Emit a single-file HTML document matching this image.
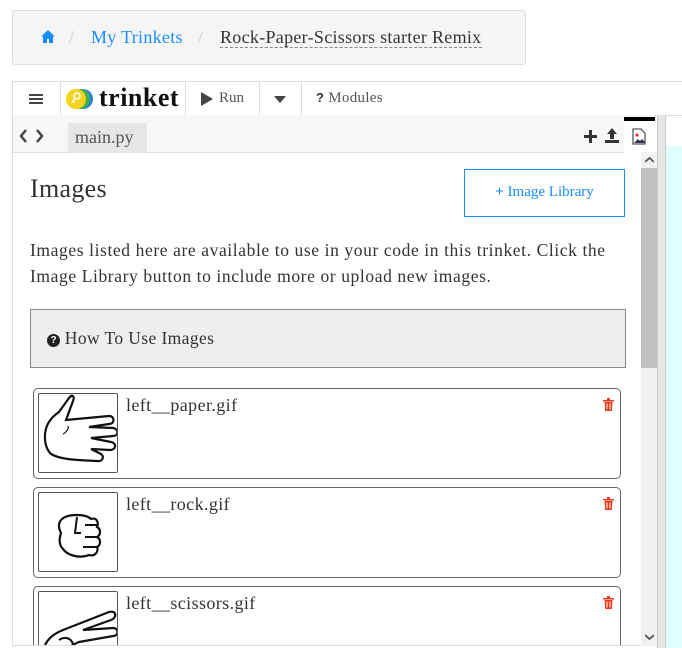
<!DOCTYPE html>
<html><head><style>
*{box-sizing:border-box;margin:0;padding:0}
body{width:682px;height:648px;overflow:hidden;background:#fff;font-family:"Liberation Serif",serif;color:#333;position:relative}
.abs{position:absolute}
.bc{left:12px;top:10px;width:514px;height:55px;background:#f5f5f5;border:1px solid #ddd;border-radius:3px}
.bc span{position:absolute;top:16px;font-size:18px;letter-spacing:0.3px}
.tb{left:12px;top:81px;width:670px;height:35px;border:1px solid #ddd;border-right:none;background:#fff}
.tb .sep{position:absolute;top:0;width:1px;height:34px;background:#ddd}
.tabs{left:12px;top:115px;width:643px;height:38px;background:#f7f7f7;border-left:1px solid #ddd;border-bottom:1px solid #ddd}
.content{left:12px;top:152px;width:629px;height:494px;border-left:1px solid #ddd;border-bottom:1px solid #ddd;overflow:hidden}
.card{position:absolute;left:20px;width:588px;height:91px;border:1px solid #666;border-radius:5px}
.thumb{position:absolute;left:4px;top:4px;width:80px;height:80px;border:1px solid #555;border-radius:2px;overflow:hidden}
.card .nm{position:absolute;left:92px;top:6px;font-size:18px;letter-spacing:0.4px}
.trash{position:absolute;right:6px;top:9px}
</style></head><body>
<div class="abs bc">
<svg class="abs" style="left:28px;top:19px" width="14" height="13" viewBox="0 0 14 13"><path d="M7 0L0 6.5h2V13h4V9h2v4h4V6.5h2z" fill="#1a8cff"/></svg>
<span style="left:56px;color:#ccc">/</span>
<span style="left:78px;color:#1a8cff">My Trinkets</span>
<span style="left:185px;color:#ccc">/</span>
<span style="left:207px;color:#333;border-bottom:1px dashed #888;line-height:20px">Rock-Paper-Scissors starter Remix</span>
</div>
<div class="abs tb">
<div class="abs" style="left:16px;top:12px;width:14px;height:2px;background:#444;box-shadow:0 4px 0 #444,0 8px 0 #444"></div>
<div class="sep" style="left:47px"></div>
<svg class="abs" style="left:52px;top:6px" width="36" height="22" viewBox="0 0 36 22"><circle cx="18" cy="11" r="10" fill="#2a7de1"/><circle cx="15" cy="11" r="10" fill="#3db34a"/><circle cx="11" cy="11" r="10" fill="#f4d41e"/><circle cx="12" cy="8" r="3" fill="none" stroke="#fff" stroke-width="1.5"/><path d="M10 10l-3 5M8 13l2 1" stroke="#fff" stroke-width="1.5"/></svg>
<div class="abs" style="left:86px;top:1px;font-size:26px;font-weight:bold;color:#111;letter-spacing:0.5px">trinket</div>
<div class="sep" style="left:172px"></div>
<svg class="abs" style="left:188px;top:10px" width="12" height="14"><path d="M0 0L12 7L0 14z" fill="#444"/></svg>
<div class="abs" style="left:206px;top:8px;font-size:15px;color:#555">Run</div>
<div class="sep" style="left:246px"></div>
<svg class="abs" style="left:261px;top:14px" width="12" height="7"><path d="M0 0h12L6 7z" fill="#444"/></svg>
<div class="sep" style="left:288px"></div>
<div class="abs" style="left:303px;top:8px;font-size:15px;color:#555;letter-spacing:0.3px"><b style="color:#333;font-family:'Liberation Sans',sans-serif;font-size:13px">?</b> Modules</div>
</div>
<div class="abs tabs">
<svg class="abs" style="left:6px;top:14px" width="30" height="14"><path d="M7 1L2 7l5 6M18 1l5 6-5 6" fill="none" stroke="#444" stroke-width="2.5"/></svg>
<div class="abs" style="left:55px;top:8px;width:79px;height:30px;background:#e6e6e6;font-size:18px;color:#555;padding:4px 0 0 7px">main.py</div>
<svg class="abs" style="left:571px;top:15px" width="13" height="13"><path d="M6.5 0v13M0 6.5h13" stroke="#333" stroke-width="3"/></svg>
<svg class="abs" style="left:591px;top:13px" width="16" height="16"><path d="M8 0L3 6h3v5h4V6h3z M1 12h14v3H1z" fill="#333"/></svg>
<div class="abs" style="left:611px;top:2px;width:31px;height:37px;background:#fff;border-top:4px solid #000"></div>
<svg class="abs" style="left:619px;top:13px" width="14" height="17"><path d="M1 1h8l4 4v11H1z" fill="#fff" stroke="#555" stroke-width="1.3"/><circle cx="5" cy="7" r="1.6" fill="#c33"/><path d="M2 15l4-4 2 2 2-2 3 3v1z" fill="#335"/></svg>
</div>
<div class="abs" style="left:641px;top:152px;width:16px;height:494px;background:#f1f1f1"></div>
<div class="abs" style="left:641px;top:168px;width:16px;height:200px;background:#c1c1c1"></div>
<svg class="abs" style="left:645px;top:157px" width="9" height="6"><path d="M0 5l4.5-4 4.5 4" fill="none" stroke="#555" stroke-width="1.8"/></svg>
<svg class="abs" style="left:645px;top:634px" width="9" height="6"><path d="M0 1l4.5 4 4.5-4" fill="none" stroke="#555" stroke-width="1.8"/></svg>
<div class="abs" style="left:657px;top:115px;width:9px;height:533px;background:#e6e6e6;border-left:1px solid #ccc;border-right:1px solid #ccc"></div>
<div class="abs" style="left:666px;top:146px;width:16px;height:502px;background:#e0ffff"></div>
<div class="abs content">
<div class="abs" style="left:17px;top:22px;font-size:26px;color:#333;letter-spacing:0.3px">Images</div>
<div class="abs" style="left:451px;top:17px;width:161px;height:48px;border:1px solid #1a8cff;color:#1a8cff;font-size:15px;text-align:center;line-height:45px"><b>+</b> Image Library</div>
<div class="abs" style="left:17px;top:85px;width:600px;font-size:17.5px;line-height:26px;color:#333;letter-spacing:0.6px">Images listed here are available to use in your code in this trinket. Click the Image Library button to include more or upload new images.</div>
<div class="abs" style="left:17px;top:157px;width:596px;height:59px;background:#eee;border:1px solid #888;font-size:17.5px;padding:18px 0 0 16px;letter-spacing:0.4px"><span style="display:inline-block;width:13px;height:13px;border-radius:50%;background:#222;color:#fff;font:bold 10px 'Liberation Sans',sans-serif;text-align:center;line-height:13px;vertical-align:1px;letter-spacing:0">?</span> How To Use Images</div>
<div class="card" style="top:236px"><div class="thumb"><svg width="80" height="80" viewBox="0 0 80 80"><path d="M6 45 C5 30 14 22 20 18 L30 4 C33 0 36 2 34 7 L27 26 L70 22 C76 22 76 30 70 30 L50 33 L74 34 C80 35 80 42 74 42 L52 44 L72 48 C78 49 77 56 71 56 L52 55 L62 60 C66 63 63 68 58 67 C40 66 22 66 12 60 C8 56 6 50 6 45Z" fill="#fff" stroke="#111" stroke-width="2.2"/><path d="M24 40 C28 38 30 34 29 32" fill="none" stroke="#111" stroke-width="1.2"/></svg></div><div class="nm">left__paper.gif</div><svg class="trash" width="11" height="13"><path d="M0 2h11v1.5H0zM4 0h3v2H4zM1.5 4h8l-.7 9H2.2z" fill="#e8391d"/><path d="M4 5.5v6M7 5.5v6" stroke="#fff" stroke-width="1"/></svg></div>
<div class="card" style="top:335px"><div class="thumb"><svg width="80" height="80" viewBox="0 0 80 80"><path d="M22 40 C16 28 24 22 38 22 C46 22 50 24 52 26 C58 24 60 30 58 34 C62 36 62 42 58 44 C62 46 62 52 58 54 C60 58 56 64 50 62 C40 66 28 62 24 56 C20 52 20 46 22 40Z" fill="#fff" stroke="#111" stroke-width="2.2"/><path d="M38 24 L36 40 L42 40 M46 32h12 M46 44h12 M44 54h14" fill="none" stroke="#111" stroke-width="2"/></svg></div><div class="nm">left__rock.gif</div><svg class="trash" width="11" height="13"><path d="M0 2h11v1.5H0zM4 0h3v2H4zM1.5 4h8l-.7 9H2.2z" fill="#e8391d"/><path d="M4 5.5v6M7 5.5v6" stroke="#fff" stroke-width="1"/></svg></div>
<div class="card" style="top:434px"><div class="thumb"><svg width="80" height="80" viewBox="0 0 80 80"><path d="M4 60 C6 48 14 42 24 38 L70 20 C78 18 78 26 72 28 L44 38 L74 36 C80 36 80 44 74 44 L40 50 C30 54 20 62 10 70" fill="#fff" stroke="#111" stroke-width="2.2"/><path d="M20 48 C26 44 32 46 34 52" fill="none" stroke="#111" stroke-width="2"/></svg></div><div class="nm">left__scissors.gif</div><svg class="trash" width="11" height="13"><path d="M0 2h11v1.5H0zM4 0h3v2H4zM1.5 4h8l-.7 9H2.2z" fill="#e8391d"/><path d="M4 5.5v6M7 5.5v6" stroke="#fff" stroke-width="1"/></svg></div>
</div>
</body></html>
